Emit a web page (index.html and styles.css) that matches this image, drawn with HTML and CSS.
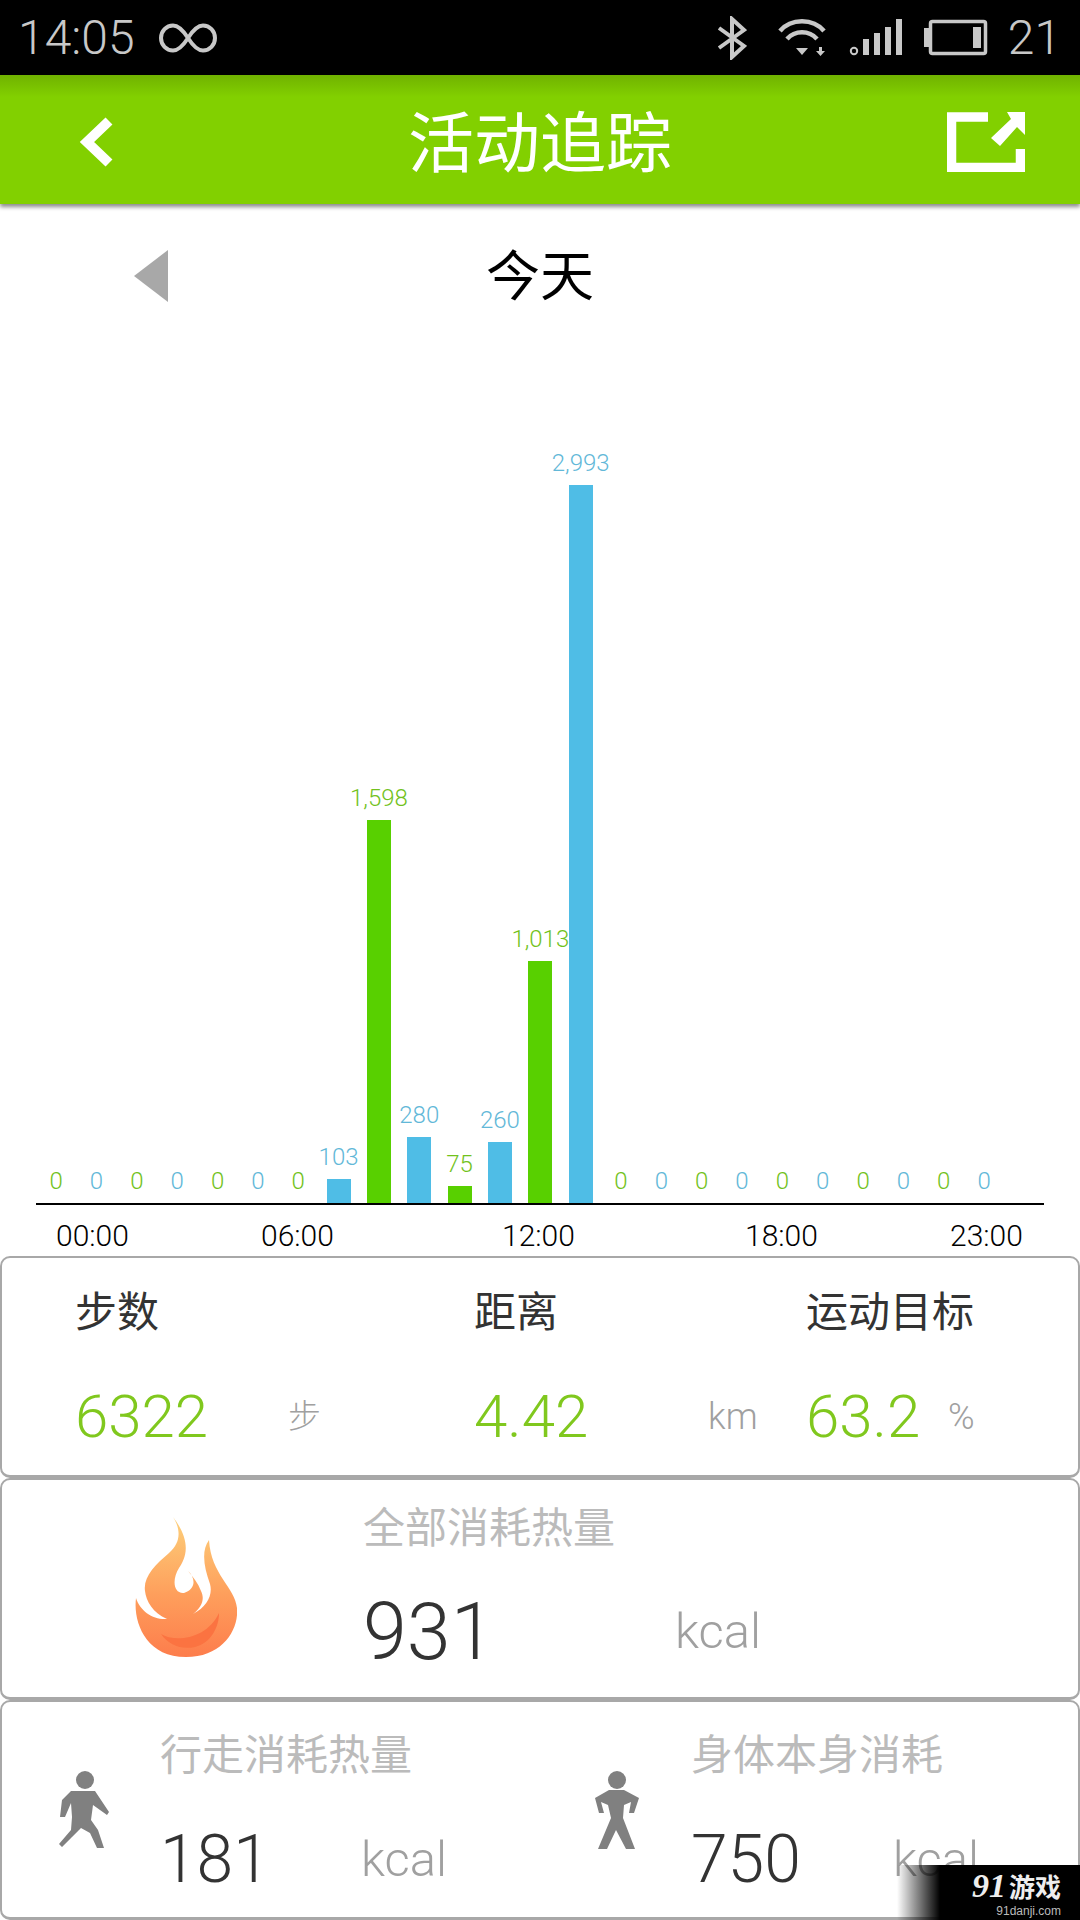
FILE: index.html
```html
<!DOCTYPE html>
<html lang="zh-CN">
<head>
    <meta charset="UTF-8">
    <meta name="viewport" content="width=device-width, initial-scale=1.0">
    <title>活动追踪</title>
    <link rel="stylesheet" href="styles.css">
</head>
<body>
<div class="main">
    <div class="status">
        <span class="clock">14:05</span>
        <svg class="ic-inf" width="62" height="32" viewBox="156 22 62 32"><path d="M187 38C180 27 175 25.5 172 25.5A12 12.5 0 0 0 172 50.5C175 50.5 180 49 187 38C194 27 199 25.5 202 25.5A12 12.5 0 0 1 202 50.5C199 50.5 194 49 187 38Z" fill="none" stroke="#c8c8c8" stroke-width="4"/></svg>
        <div class="status-right">
            <svg width="32" height="44" viewBox="716 18 32 44"><path d="M720 30L745 48L733 59V21L745 32L720 50" fill="none" stroke="#c8c8c8" stroke-width="4"/></svg>
            <svg class="ic-wifi" width="50" height="40" viewBox="778 18 50 40" fill="none" stroke="#c8c8c8" stroke-width="4.5"><path d="M781 31C792 18 814 18 825 31"/><path d="M788 39C796 30 810 30 818 39"/><path d="M797 48H809L803 55Z" fill="#c8c8c8" stroke="none"/><path d="M820 47H823V51H826L821.500 56L817 51H820Z" fill="#c8c8c8" stroke="none"/></svg>
            <svg class="ic-signal" width="56" height="40" viewBox="849 18 56 40" fill="#c8c8c8"><circle cx="855" cy="51" r="3.200" fill="none" stroke="#c8c8c8" stroke-width="2"/><rect x="864" y="39" width="6" height="16"/><rect x="875" y="33" width="6" height="22"/><rect x="886" y="27" width="6" height="28"/><rect x="897" y="19" width="6" height="36"/></svg>
            <svg class="ic-batt" width="64" height="38" viewBox="925 19 64 38"><rect x="925" y="28" width="5" height="19" fill="#c8c8c8"/><rect x="931.500" y="21.500" width="55" height="32" rx="2" fill="none" stroke="#c8c8c8" stroke-width="3.500"/><rect x="974" y="27" width="8" height="21" fill="#c8c8c8"/></svg>
            <span class="clock level">21</span>
        </div>
    </div>

    <div class="header">
        <svg class="back" width="40" height="56" viewBox="76 114 40 56"><path d="M109 121L87 142L109 163" fill="none" stroke="#fff" stroke-width="10"/></svg>
        <div class="title">活动追踪</div>
        <svg class="share" width="78" height="60" viewBox="947 113 78 60" fill="#fff"><path d="M988 118H951.500V168.500H1020.500V150" fill="none" stroke="#fff" stroke-width="9.500"/><polygon points="1007,113 1025,113 1025,136 1017,128 1000,147 991,139 1011,120"/></svg>
    </div>

    <div class="date-row">
        <div class="tri"></div>
        <div class="today">今天</div>
    </div>

    <div class="chart">
        <div class="col"><span class="num g">0</span></div>
        <div class="col"><span class="num b">0</span></div>
        <div class="col"><span class="num g">0</span></div>
        <div class="col"><span class="num b">0</span></div>
        <div class="col"><span class="num g">0</span></div>
        <div class="col"><span class="num b">0</span></div>
        <div class="col"><span class="num g">0</span></div>
        <div class="col"><span class="num b">103</span><div class="bar bar-b" style="height:24px"></div></div>
        <div class="col"><span class="num g">1,598</span><div class="bar bar-g" style="height:383px"></div></div>
        <div class="col"><span class="num b">280</span><div class="bar bar-b" style="height:66px"></div></div>
        <div class="col"><span class="num g">75</span><div class="bar bar-g" style="height:17px"></div></div>
        <div class="col"><span class="num b">260</span><div class="bar bar-b" style="height:61px"></div></div>
        <div class="col"><span class="num g">1,013</span><div class="bar bar-g" style="height:242px"></div></div>
        <div class="col"><span class="num b">2,993</span><div class="bar bar-b" style="height:718px"></div></div>
        <div class="col"><span class="num g">0</span></div>
        <div class="col"><span class="num b">0</span></div>
        <div class="col"><span class="num g">0</span></div>
        <div class="col"><span class="num b">0</span></div>
        <div class="col"><span class="num g">0</span></div>
        <div class="col"><span class="num b">0</span></div>
        <div class="col"><span class="num g">0</span></div>
        <div class="col"><span class="num b">0</span></div>
        <div class="col"><span class="num g">0</span></div>
        <div class="col"><span class="num b">0</span></div>
    </div>

    <div class="times">
        <span>00:00</span>
        <span>06:00</span>
        <span>12:00</span>
        <span>18:00</span>
        <span>23:00</span>
    </div>

    <div class="card stats">
        <div class="stat-label">步数</div>
        <div class="stat-label">距离</div>
        <div class="stat-label">运动目标</div>
        <div class="stat-num">6322</div>
        <div class="stat-unit cjk">步</div>
        <div class="stat-num">4.42</div>
        <div class="stat-unit">km</div>
        <div class="stat-num">63.2</div>
        <div class="stat-unit">%</div>
    </div>

    <div class="card total">
        <svg class="flame" width="102" height="140" viewBox="0 0 102 140">
            <defs>
                <linearGradient id="flameFill" x1="0" y1="0" x2="0" y2="1">
                    <stop offset="0" stop-color="#fdd07a"/>
                    <stop offset="0.55" stop-color="#fe9f5c"/>
                    <stop offset="1" stop-color="#fd7d4c"/>
                </linearGradient>
            </defs>
            <path fill="url(#flameFill)" d="M38 0C46 12 46 26 34 36C20 48 8 60 10 74C11 84 18 96 32 102C18 103 5 94 1 81C-2 104 10 140 51 140C88 140 104 112 102 91C100 70 76 58 74 23C66 34 69 50 75 67C78 78 72 90 58 97C67 90 70 82 66 74C63 66 58 60 53 54C60 60 62 72 49 76C38 77 37 62 44 51C50 42 58 26 38 0Z"/>
            <path fill="#fb7341" d="M26 117C40 126 72 122 84 96C84 110 76 126 60 130C46 133 34 128 26 117Z"/>
        </svg>
        <div class="total-body">
            <div class="muted-label">全部消耗热量</div>
            <div class="total-row">
                <span class="big">931</span>
                <span class="kcal">kcal</span>
            </div>
        </div>
    </div>

    <div class="card burn">
        <div class="burn-item walk">
            <svg class="person" width="50" height="78" viewBox="0 0 50 78" fill="#808080"><circle cx="26" cy="9" r="9"/><polygon points="12,20 36,20 50,41 48,44 34,34 32,49 39,59 45,77 38,77 31,62 22,57 13,66 3,76 0,73 12,59 13,46 12,32 6,46 1,46 3,29"/></svg>
            <div class="burn-body">
                <div class="muted-label">行走消耗热量</div>
                <div class="burn-row">
                    <span class="mid">181</span>
                    <span class="kcal">kcal</span>
                </div>
            </div>
        </div>
        <div class="burn-item body">
            <svg class="person" width="48" height="78" viewBox="0 0 48 78" fill="#808080"><circle cx="24" cy="9" r="9"/><polygon points="2,27 16,19 31,19 46,27 41,42 36,42 38,31 31,34 30,47 42,78 33,78 23,59 14,78 5,78 18,47 15,34 8,31 11,42 6,42"/></svg>
            <div class="burn-body">
                <div class="muted-label">身体本身消耗</div>
                <div class="burn-row">
                    <span class="mid">750</span>
                    <span class="kcal">kcal</span>
                </div>
            </div>
        </div>
    </div>

    <div class="mark">
        <div class="mark-logo"><span class="mark-num">91</span>游戏</div>
        <div class="mark-url">91danji.com</div>
    </div>
</div>
</body>
</html>
```

FILE: styles.css
```css
*{
    box-sizing: border-box;
}
body{
    margin: 0;
    background: #fff;
    font-family: Roboto, "Noto Sans CJK SC", sans-serif;
}
.main{
    position: relative;
    width: 1080px;
    height: 1920px;
    overflow: hidden;
}
svg{
    display: block;
    flex: none;
}

/* status bar */
.status{
    display: flex;
    align-items: center;
    height: 75px;
    padding: 0 19px 0 18px;
    background: #000;
}
.clock{
    color: #c8c8c8;
    font-size: 48px;
    font-weight: 300;
    line-height: 75px;
}
.ic-inf{
    margin-left: 22px;
}
.status-right{
    display: flex;
    align-items: center;
    height: 75px;
    margin-left: auto;
}
.ic-wifi{
    margin-left: 30px;
}
.ic-signal{
    margin-left: 21px;
}
.ic-batt{
    margin-left: 20px;
}
.level{
    margin-left: 20px;
}

/* green header */
.header{
    position: relative;
    display: grid;
    grid-template-columns: 1fr auto 1fr;
    align-items: center;
    height: 129px;
    padding: 0 55px;
    background: linear-gradient(#70b200, #82d000 22px);
    box-shadow: 0 3px 4px rgba(0, 0, 0, 0.45);
}
.title{
    margin-top: 10px;
    color: #fff;
    font-size: 66px;
    line-height: 90px;
}
.back{
    margin: 5px 0 0 21px;
}
.share{
    justify-self: end;
    margin-top: 5px;
}

/* date row */
.date-row{
    display: grid;
    grid-template-columns: 1fr auto 1fr;
    align-items: center;
    height: 146px;
}
.tri{
    width: 0;
    height: 0;
    margin: 0 0 2px 134px;
    border-style: solid;
    border-width: 26px 34px 26px 0;
    border-color: transparent #a8a8a8 transparent transparent;
}
.today{
    margin-bottom: 10px;
    color: #000;
    font-size: 54px;
}

/* bar chart */
.chart{
    display: grid;
    grid-template-columns: repeat(24, 40.35px);
    align-items: end;
    width: 1008px;
    height: 855px;
    margin-left: 36px;
    border-bottom: 2px solid #000;
}
.col{
    display: flex;
    flex-direction: column;
    align-items: center;
}
.num{
    font-size: 24px;
    font-weight: 300;
    line-height: 28px;
    margin-bottom: 8px;
    white-space: nowrap;
}
.g{
    color: #72c21c;
}
.b{
    color: #62b8d8;
}
.bar{
    width: 24px;
}
.bar-g{
    background: #58d000;
}
.bar-b{
    background: #4fbde6;
}

/* hours under the chart */
.times{
    display: grid;
    grid-template-columns: 205px 241px 243px 205px auto;
    height: 51px;
    padding: 6px 0 0 56px;
    color: #000;
    font-size: 30px;
    font-weight: 300;
    line-height: 50px;
}

/* cards */
.card{
    height: 222px;
    border: 2px solid #a8a8a8;
    border-bottom-width: 3px;
    border-radius: 10px;
}
.stats{
    display: grid;
    grid-template-columns: 213px 186px 234px 98px 142px auto;
    grid-template-rows: 76px 106px;
    padding: 30px 0 0 73px;
}
.stat-label{
    grid-column: span 2;
    color: #333;
    font-size: 42px;
    line-height: 50px;
}
.stat-num{
    color: #80c81e;
    font-size: 60px;
    font-weight: 300;
    line-height: 106px;
}
.stat-unit{
    color: #a0a0a0;
    font-size: 36px;
    font-weight: 300;
    line-height: 106px;
}
.cjk{
    font-size: 33px;
}
.total{
    display: flex;
}
.flame{
    margin: 37px 0 0 133px;
}
.total-body{
    margin-left: 126px;
    padding-top: 23px;
}
.muted-label{
    color: #bbb;
    font-size: 42px;
    line-height: 52px;
}
.total-row{
    display: flex;
    align-items: center;
    margin-top: 27px;
    line-height: 100px;
}
.big{
    width: 312px;
    color: #333;
    font-size: 79px;
    font-weight: 300;
}
.kcal{
    color: #a0a0a0;
    font-size: 49px;
    font-weight: 300;
}
.burn{
    display: flex;
    height: 220px;
}
.burn-item{
    display: flex;
}
.walk{
    width: 591px;
    padding-left: 57px;
}
.person{
    margin-top: 69px;
}
.burn-body{
    margin-left: 51px;
    padding-top: 28px;
}
.body .burn-body{
    margin-left: 50px;
}
.burn-row{
    display: flex;
    align-items: center;
    margin-top: 33px;
    line-height: 90px;
}
.mid{
    color: #333;
    font-size: 66px;
    font-weight: 300;
}
.walk .mid{
    width: 201px;
}
.body .mid{
    width: 202px;
}

/* site watermark over the corner */
.mark{
    position: absolute;
    right: 0;
    bottom: 0;
    width: 183px;
    height: 55px;
    padding: 7px 19px 0 0;
    text-align: right;
    background: linear-gradient(90deg, rgba(0, 0, 0, 0), #000 43px);
}
.mark-logo{
    color: #eee;
    font-size: 26px;
    font-weight: 700;
    line-height: 27px;
    white-space: nowrap;
}
.mark-num{
    margin-right: 3px;
    font-family: "Liberation Serif", serif;
    font-size: 34px;
    font-style: italic;
    line-height: 27px;
}
.mark-url{
    margin-top: 2px;
    color: #bbb;
    font-family: "Liberation Sans", sans-serif;
    font-size: 12px;
    line-height: 14px;
}
```
